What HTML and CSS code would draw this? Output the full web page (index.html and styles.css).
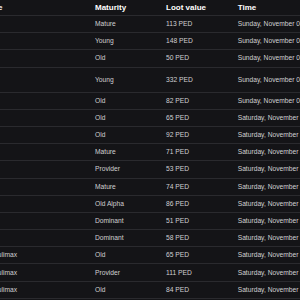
FILE: index.html
```html
<!DOCTYPE html>
<html lang="en">
  <head>
    <meta charset="UTF-8" />
    <meta name="viewport" content="width=device-width, initial-scale=1.0" />
    <title>Loot log</title>
    <link rel="stylesheet" href="styles.css">
  </head>
  <body>
    <div class="log-wrap">
      <table class="loot-log">
        <thead>
          <tr>
            <th class="col-name">Creature name</th>
            <th class="col-maturity">Maturity</th>
            <th class="col-loot">Loot value</th>
            <th class="col-time">Time</th>
          </tr>
        </thead>
        <tbody>
          <tr><td>Atrox</td><td>Mature</td><td>113 PED</td><td>Sunday, November 06, 2022</td></tr>
          <tr><td>Atrox</td><td>Young</td><td>148 PED</td><td>Sunday, November 06, 2022</td></tr>
          <tr><td>Atrox</td><td>Old</td><td>50 PED</td><td>Sunday, November 06, 2022</td></tr>
          <tr class="tall"><td>Merp</td><td>Young</td><td>332 PED</td><td>Sunday, November 06, 2022</td></tr>
          <tr><td>Atrox</td><td>Old</td><td>82 PED</td><td>Sunday, November 06, 2022</td></tr>
          <tr><td>Atrox</td><td>Old</td><td>65 PED</td><td>Saturday, November 05, 2022</td></tr>
          <tr><td>Atrox</td><td>Old</td><td>92 PED</td><td>Saturday, November 05, 2022</td></tr>
          <tr><td>Atrox</td><td>Mature</td><td>71 PED</td><td>Saturday, November 05, 2022</td></tr>
          <tr><td>Atrox</td><td>Provider</td><td>53 PED</td><td>Saturday, November 05, 2022</td></tr>
          <tr><td>Atrox</td><td>Mature</td><td>74 PED</td><td>Saturday, November 05, 2022</td></tr>
          <tr><td>Atrox</td><td>Old Alpha</td><td>86 PED</td><td>Saturday, November 05, 2022</td></tr>
          <tr><td>Atrox</td><td>Dominant</td><td>51 PED</td><td>Saturday, November 05, 2022</td></tr>
          <tr><td>Atrox</td><td>Dominant</td><td>58 PED</td><td>Saturday, November 05, 2022</td></tr>
          <tr><td>Daspletor Old Caulimax</td><td>Old</td><td>65 PED</td><td>Saturday, November 05, 2022</td></tr>
          <tr><td>Daspletor Old Caulimax</td><td>Provider</td><td>111 PED</td><td>Saturday, November 05, 2022</td></tr>
          <tr><td>Daspletor Old Caulimax</td><td>Old</td><td>84 PED</td><td>Saturday, November 05, 2022</td></tr>
          <tr><td>Daspletor Old Caulimax</td><td>Old</td><td>70 PED</td><td>Saturday, November 05, 2022</td></tr>
        </tbody>
      </table>
    </div>
  </body>
</html>
```

FILE: styles.css
```css
html,
body {
  margin: 0;
  height: 100%;
  background-color: #141417;
  overflow: hidden;
}

.log-wrap {
  width: 300px;
  height: 300px;
  overflow: hidden;
}

.loot-log {
  margin-left: -61.5px;
  border-collapse: separate;
  border-spacing: 0;
  table-layout: fixed;
  width: 560px;
  font-family: "Liberation Sans", Arial, sans-serif;
  font-size: 6.7px;
  line-height: 10px;
  color: #d0d0d2;
}

th,
td {
  padding: 0 8px;
  text-align: left;
  white-space: nowrap;
  overflow: hidden;
  border-bottom: 1px solid #2a2a2e;
}

th {
  height: 15px;
  color: #ffffff;
  font-size: 8px;
  font-weight: bold;
}

td {
  height: 16.2px;
}

.tall td {
  height: 24px;
}

.col-name {
  width: 132.5px;
}

.col-maturity {
  width: 55px;
}

.col-loot {
  width: 55.7px;
}

.col-time {
  width: 284px;
}
```
